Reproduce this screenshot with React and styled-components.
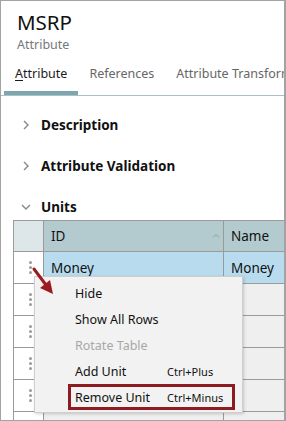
import React from "react";
import styled, { createGlobalStyle } from "styled-components";

const Global = createGlobalStyle`
  html, body { margin: 0; padding: 0; background: #fff; }
  body { font-family: "Noto Sans", "Open Sans", sans-serif; }
  * { box-sizing: border-box; }
`;

const Frame = styled.div`
  position: relative;
  width: 286px;
  height: 421px;
  border: 1px solid #a3a3a3;
  border-right-width: 2px;
  overflow: hidden;
  background: #fff;
  color: #1a1a1a;
`;

const Header = styled.div`
  padding: 9px 0 0 16px;
  display: flex;
  flex-direction: column;
  gap: 2px;
`;

const Title = styled.div`
  font-size: 20.5px;
  line-height: 25px;
  color: #111;
`;

const Subtitle = styled.div`
  font-size: 12.5px;
  line-height: 15px;
  color: #777;
`;

const Tabs = styled.div`
  display: flex;
  margin-top: 13px;
  padding-left: 3px;
  border-bottom: 1px solid #a9c0c6;
  overflow: hidden;
`;

const Tab = styled.div`
  padding: 0 11px 9px 11px;
  font-size: 12.5px;
  line-height: 17px;
  color: ${(p) => (p.$active ? "#1a1a1a" : "#666")};
  border-bottom: 4px solid ${(p) => (p.$active ? "#7fa6ae" : "transparent")};
  white-space: nowrap;
  u { text-decoration: underline; text-underline-offset: 2px; }
`;

const Sections = styled.div`
  padding: 20px 0 0 20px;
  display: flex;
  flex-direction: column;
  gap: 23px;
`;

const Section = styled.div`
  display: flex;
  align-items: center;
  gap: 10px;
  height: 18px;
  font-weight: 700;
  font-size: 13.5px;
  color: #111;
`;

const Chevron = ({ open }) => (
  <svg width="10" height="10" viewBox="0 0 10 10">
    {open ? (
      <path d="M1 3 L5 7 L9 3" fill="none" stroke="#888" strokeWidth="1.4" />
    ) : (
      <path d="M3 1 L7 5 L3 9" fill="none" stroke="#888" strokeWidth="1.4" />
    )}
  </svg>
);

const Table = styled.div`
  margin: 4px 0 0 12px;
  display: grid;
  grid-template-columns: 30px 180px 70px;
  grid-template-rows: 31px;
  grid-auto-rows: 32px;
  border-top: 1px solid #9a9a9a;
  border-left: 1px solid #9a9a9a;
`;

const Cell = styled.div`
  display: flex;
  align-items: center;
  padding-left: ${(p) => (p.$handle ? "0" : "7px")};
  justify-content: ${(p) => (p.$handle ? "center" : "flex-start")};
  border-right: 1px solid #9a9a9a;
  border-bottom: 1px solid #9a9a9a;
  font-size: 13.5px;
  color: #111;
  position: relative;
  background: ${(p) => p.$bg || "#fff"};
`;

const Row = styled.div`
  display: contents;
`;

const SortMark = styled.svg`
  position: absolute;
  right: 3px;
  top: 12px;
`;

const Dots = styled.span`
  display: flex;
  flex-direction: column;
  gap: 2px;
  margin-left: 4px;
  span {
    width: 3px;
    height: 3px;
    border-radius: 50%;
    background: #9a9a9a;
  }
`;

const Handle = () => (
  <Dots>
    <span />
    <span />
    <span />
  </Dots>
);

const Menu = styled.div`
  position: absolute;
  left: 33px;
  top: 275px;
  width: 209px;
  padding: 3px 0 2px;
  background: #f2f2f2;
  border: 1px solid #cfcfcf;
  box-shadow: 1px 1px 3px rgba(0, 0, 0, 0.18);
`;

const Item = styled.div`
  position: relative;
  display: flex;
  align-items: center;
  height: 26px;
  padding-left: 40px;
  font-size: 12.5px;
  color: ${(p) => (p.$disabled ? "#a8a8a8" : "#111")};
`;

const Label = styled.span`
  width: 92px;
  white-space: nowrap;
`;

const Shortcut = styled.span`
  font-size: 11px;
  white-space: nowrap;
`;

const Highlight = styled.div`
  position: absolute;
  left: 33px;
  top: 0;
  width: 167px;
  height: 26px;
  border: 3px solid #8c1c22;
`;

const Arrow = styled.svg`
  position: absolute;
  left: 28px;
  top: 262px;
`;

const rows = [
  { id: "Money", name: "Money", selected: true },
  {},
  {},
  {},
  {},
  {},
];

export default function App() {
  return (
    <>
      <Global />
      <Frame>
        <Header>
          <Title>MSRP</Title>
          <Subtitle>Attribute</Subtitle>
        </Header>
        <Tabs>
          <Tab $active>
            <u>A</u>ttribute
          </Tab>
          <Tab>References</Tab>
          <Tab>Attribute Transformations</Tab>
        </Tabs>
        <Sections>
          <Section>
            <Chevron />
            Description
          </Section>
          <Section>
            <Chevron />
            Attribute Validation
          </Section>
          <Section>
            <Chevron open />
            Units
          </Section>
        </Sections>
        <Table>
          <Row>
            <Cell $handle $bg="#dde6e9" />
            <Cell $bg="#b3cacf">
              ID
              <SortMark width="8" height="5" viewBox="0 0 8 5">
                <path d="M1 4.5 L4 1.5 L7 4.5" fill="none" stroke="#8a9ca0" strokeWidth="1" />
              </SortMark>
            </Cell>
            <Cell $bg="#b3cacf">Name</Cell>
          </Row>
          {rows.map((r, i) => (
            <Row key={i}>
              <Cell $handle>
                <Handle />
              </Cell>
              <Cell $bg={r.selected ? "#b8dcee" : "#efefef"}>{r.id}</Cell>
              <Cell $bg={r.selected ? "#b8dcee" : "#efefef"}>{r.name}</Cell>
            </Row>
          ))}
        </Table>
        <Menu>
          <Item>
            <Label>Hide</Label>
          </Item>
          <Item>
            <Label>Show All Rows</Label>
          </Item>
          <Item $disabled>
            <Label>Rotate Table</Label>
          </Item>
          <Item>
            <Label>Add Unit</Label>
            <Shortcut>Ctrl+Plus</Shortcut>
          </Item>
          <Item>
            <Label>Remove Unit</Label>
            <Shortcut>Ctrl+Minus</Shortcut>
            <Highlight />
          </Item>
        </Menu>
        <Arrow width="30" height="36" viewBox="0 0 30 36">
          <line x1="5" y1="6" x2="17" y2="22" stroke="#9b1b20" strokeWidth="3" strokeLinecap="round" />
          <polygon points="24,31 11,25 21,17" fill="#9b1b20" />
        </Arrow>
      </Frame>
    </>
  );
}
